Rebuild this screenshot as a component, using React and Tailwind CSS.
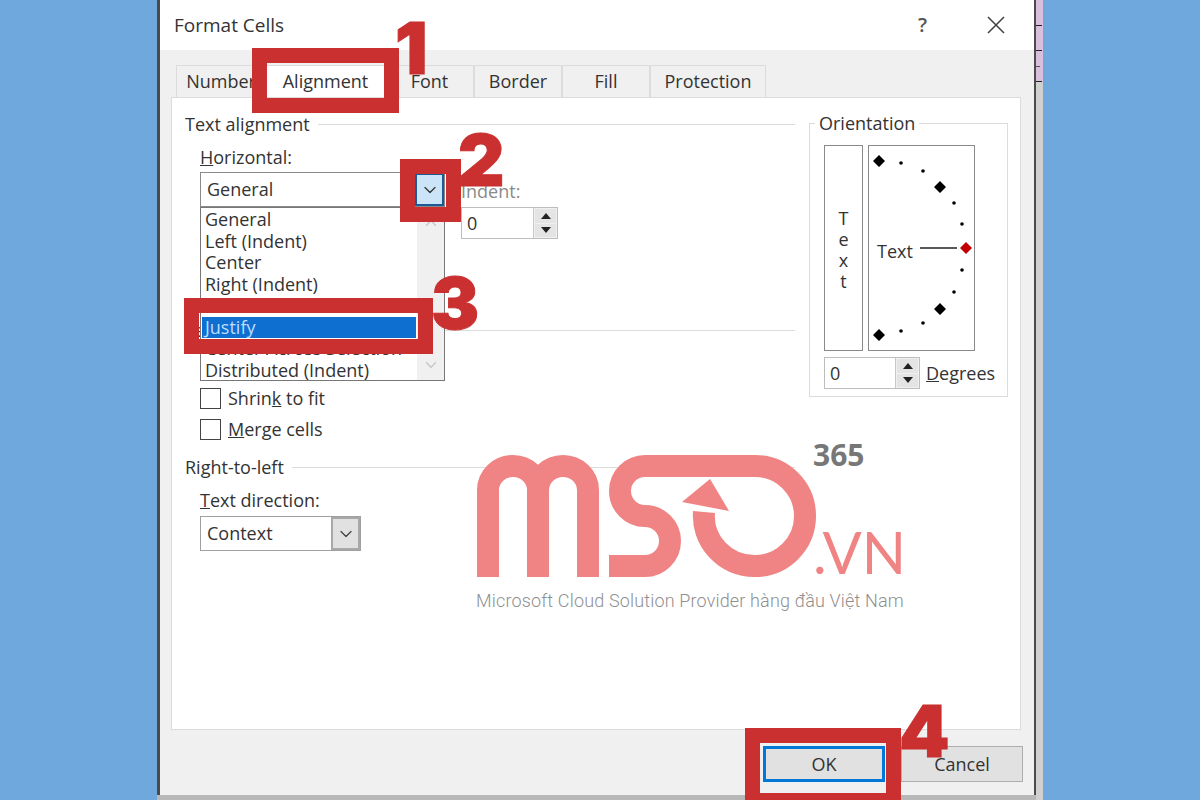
import React from 'react';
import { ChevronDown } from 'lucide-react';

const Spin = () => (
    <div className="w-[24px] h-full flex flex-col gap-px bg-[#f0f0f0] border-l border-[#c8c8c8] p-px">
        <div className="flex-1 bg-[#e4e4e4] flex items-center justify-center">
            <svg width="10" height="6" viewBox="0 0 10 6"><path d="M5 0 L10 6 L0 6 Z" fill="#222" /></svg>
        </div>
        <div className="flex-1 bg-[#e4e4e4] flex items-center justify-center">
            <svg width="10" height="6" viewBox="0 0 10 6"><path d="M0 0 L10 0 L5 6 Z" fill="#222" /></svg>
        </div>
    </div>
);

const GroupTitle = ({ children }) => (
    <div className="h-[24px] flex items-center gap-[8px]">
        <span>{children}</span>
        <div className="flex-1 h-px bg-[#dcdcdc]"></div>
    </div>
);

const Check = ({ children }) => (
    <div className="h-[24px] ml-[15px] flex items-center gap-[7px]">
        <div className="w-[21px] h-[21px] border border-[#444] bg-white"></div>
        <span>{children}</span>
    </div>
);

const Tab = ({ label, className }) => (
    <div className={`h-[32px] flex items-center justify-center bg-[#f0f0f0] border border-b-0 border-[#dcdcdc] ${className}`}>{label}</div>
);

const listItems = ['General', 'Left (Indent)', 'Center', 'Right (Indent)', 'Fill', 'Justify', 'Center Across Selection', 'Distributed (Indent)'];

const Dial = () => (
    <svg width="105" height="204" viewBox="869 146 105 204" className="absolute left-0 top-0">
        <path d="M879 155 L885 161 L879 167 L873 161 Z M940 181 L946 187 L940 193 L934 187 Z M940 303 L946 309 L940 315 L934 309 Z M879 329 L885 335 L879 341 L873 335 Z" fill="#000" />
        <path d="M966 242 L972 248 L966 254 L960 248 Z" fill="#c00000" />
        <path d="M920 248 H957" stroke="#222" strokeWidth="1.5" />
        {[[901, 163], [923, 171], [954, 203], [962, 224], [962, 270], [954, 292], [923, 323], [901, 331]].map(([x, y]) => (
            <circle key={`${x}-${y}`} cx={x} cy={y} r="1.8" fill="#000" />
        ))}
    </svg>
);

const App = () => {
    return (
        <div className="relative w-[1200px] h-[800px] overflow-hidden bg-[#6fa8dc] text-[#333] text-[18px] font-['Open_Sans',sans-serif]">
            <div className="flex h-full pl-[157px]">
                <div className="w-[879px] h-full bg-[#b8b8b8]">
                    <div className="w-full h-[795px] flex flex-col border-l-[3px] border-r-[2px] border-[#4a4a4a] bg-[#f0f0f0]">
                        {/* title bar */}
                        <div className="h-[50px] shrink-0 bg-white flex items-center pl-[14px]">
                            <span className="text-[19px]">Format Cells</span>
                            <span className="ml-auto text-[20px] font-semibold text-[#555]">?</span>
                            <svg width="20" height="20" viewBox="0 0 20 20" className="ml-[59px] mr-[28px]">
                                <path d="M2 2 L18 18 M18 2 L2 18" stroke="#444" strokeWidth="1.6" />
                            </svg>
                        </div>

                        {/* tabs */}
                        <div className="h-[47px] shrink-0 flex items-end pl-[16px]">
                            <Tab label="Number" className="w-[90px]" />
                            <Tab label="Alignment" className="w-[119px] bg-white" />
                            <Tab label="Font" className="w-[89px]" />
                            <Tab label="Border" className="w-[88px]" />
                            <Tab label="Fill" className="w-[88px]" />
                            <Tab label="Protection" className="w-[116px]" />
                        </div>

                        <div className="ml-[11px] w-[850px] h-[633px] shrink-0 bg-white border border-[#dcdcdc] flex">
                            {/* left column */}
                            <div className="w-[610px] ml-[13px] pt-[14px]">
                                <GroupTitle>Text alignment</GroupTitle>
                                <div className="ml-[15px] mt-[9px] h-[24px] flex items-center"><span><u>H</u>orizontal:</span></div>
                                <div className="ml-[15px] mt-[3px] flex items-start">
                                    <div className="relative w-[245px] h-[35px] border border-[#8a8a8a] bg-white flex items-center pl-[6px]">
                                        General
                                        <div className="absolute right-0 top-0 w-[29px] h-full bg-[#cce4f7] border-2 border-[#1a5a96] flex items-center justify-center">
                                            <ChevronDown size={20} strokeWidth={1.5} color="#333" />
                                        </div>
                                        <div className="absolute z-10 left-[-1px] top-[34px] w-[245px] h-[174px] border border-[#777] bg-white flex">
                                            <div className="flex-1 min-w-0 pl-[4px] pr-[1px] pt-[1px]">
                                                {listItems.map((item) => (
                                                    <div
                                                        key={item}
                                                        className={item === 'Justify'
                                                            ? 'h-[21.5px] -ml-[3px] pl-[3px] leading-[21.5px] bg-[#0f6fd0] text-[#bcdcff]'
                                                            : 'h-[21.5px] leading-[21.5px] whitespace-nowrap'}
                                                    >
                                                        {item}
                                                    </div>
                                                ))}
                                            </div>
                                            <div className="w-[27px] shrink-0 bg-[#f0f0f0] flex flex-col items-center justify-between py-[6px]">
                                                <ChevronDown size={18} color="#c8c8c8" className="rotate-180" />
                                                <ChevronDown size={18} color="#c8c8c8" />
                                            </div>
                                        </div>
                                    </div>
                                    <div className="ml-[16px] mt-[7px]">
                                        <div className="h-[24px] flex items-center text-[#8a8a8a]">Indent:</div>
                                        <div className="mt-[4px] w-[97px] h-[32px] border border-[#bdbdbd] flex items-center">
                                            <span className="flex-1 pl-[5px]">0</span>
                                            <Spin />
                                        </div>
                                    </div>
                                </div>
                                <div className="mt-[79px]"><GroupTitle>Text control</GroupTitle></div>
                                <div className="mt-[44px]"><Check>Shrin<u>k</u> to fit</Check></div>
                                <div className="mt-[7px]"><Check><u>M</u>erge cells</Check></div>
                                <div className="mt-[14px]"><GroupTitle>Right-to-left</GroupTitle></div>
                                <div className="ml-[15px] mt-[9px] h-[24px] flex items-center"><span><u>T</u>ext direction:</span></div>
                                <div className="ml-[15px] mt-[4px] w-[161px] h-[35px] border border-[#a0a0a0] bg-white flex items-center pl-[6px]">
                                    <span className="flex-1">Context</span>
                                    <div className="w-[29px] h-full bg-[#e1e1e1] border-2 border-[#a8a8a8] flex items-center justify-center">
                                        <ChevronDown size={20} strokeWidth={1.5} color="#444" />
                                    </div>
                                </div>
                            </div>

                            {/* orientation */}
                            <div className="relative ml-[14px] mt-[25px] w-[199px] h-[274px] border border-[#dcdcdc] pl-[14px] pt-[21px]">
                                <span className="absolute left-[5px] top-[-13px] bg-white px-[4px] leading-[24px]">Orientation</span>
                                <div className="flex gap-[5px]">
                                    <div className="w-[39px] h-[206px] border border-[#8a8a8a] flex flex-col items-center justify-center leading-[21px] pt-[4px]">
                                        <span>T</span><span>e</span><span>x</span><span>t</span>
                                    </div>
                                    <div className="relative w-[107px] h-[206px] border border-[#8a8a8a]">
                                        <Dial />
                                        <span className="absolute left-[8px] top-[92px]">Text</span>
                                    </div>
                                </div>
                                <div className="mt-[6px] flex items-center gap-[6px]">
                                    <div className="w-[96px] h-[32px] border border-[#bdbdbd] flex items-center">
                                        <span className="flex-1 pl-[5px]">0</span>
                                        <Spin />
                                    </div>
                                    <span><u>D</u>egrees</span>
                                </div>
                            </div>
                        </div>

                        {/* buttons */}
                        <div className="mt-[16px] flex justify-end gap-[16px] pr-[11px]">
                            <div className="w-[122px] h-[36px] bg-[#e1e1e1] border-[3px] border-[#0078d7] flex items-center justify-center">OK</div>
                            <div className="w-[122px] h-[36px] bg-[#e1e1e1] border border-[#adadad] flex items-center justify-center">Cancel</div>
                        </div>
                    </div>
                </div>
                {/* sliver of the sheet behind the dialog */}
                <div className="w-[7px] h-full flex flex-col">
                    <div className="h-[82px] bg-[#d8c0dc] flex flex-col pt-[25px]">
                        <div className="h-px w-[6px] bg-[#222]"></div>
                        <div className="h-px w-[6px] mt-[24px] bg-[#222]"></div>
                        <div className="h-px w-[4px] mt-[15px] bg-[#555]"></div>
                        <div className="h-px w-[6px] mt-[14px] bg-[#222]"></div>
                    </div>
                    <div className="flex-1 bg-[#d0d0d0]"></div>
                </div>
            </div>

            {/* red callouts */}
            <div className="absolute z-20 left-[252px] top-[48px] w-[147px] h-[65px] border-[15px] border-[#c9302f]"></div>
            <div className="absolute z-20 left-[400px] top-[159px] w-[61px] h-[63px] border-[15px] border-[#c9302f]"></div>
            <div className="absolute z-20 left-[184px] top-[298px] w-[249px] h-[56px] border-[15px] border-[#c9302f]"></div>
            <div className="absolute z-20 left-[745px] top-[728px] w-[156px] h-[80px] border-[15px] border-[#c9302f]"></div>

            <span className="absolute z-20 left-[395px] top-[8px] text-[72px] leading-[80px] font-black text-[#c9302f] [-webkit-text-stroke:1px_#c9302f] font-['Inter',sans-serif]">1</span>
            <span className="absolute z-20 left-[458px] top-[120px] text-[72px] leading-[80px] font-black text-[#c9302f] [-webkit-text-stroke:1px_#c9302f] font-['Inter',sans-serif]">2</span>
            <span className="absolute z-20 left-[431px] top-[263px] text-[72px] leading-[80px] font-black text-[#c9302f] [-webkit-text-stroke:1px_#c9302f] font-['Inter',sans-serif]">3</span>
            <span className="absolute z-20 left-[899px] top-[691px] text-[72px] leading-[80px] font-black text-[#c9302f] [-webkit-text-stroke:1px_#c9302f] font-['Inter',sans-serif]">4</span>

            {/* watermark */}
            <svg width="340" height="122" viewBox="477 455 340 122" className="absolute z-10 left-[477px] top-[455px]">
                <g fill="none" stroke="#f08383" strokeWidth="22">
                    <path d="M488 577 V490 A25 24 0 0 1 538 490 V577 M538 490 A25 24 0 0 1 588 490 V577" />
                    <path d="M609 566 H645 A25 25 0 0 0 645 516 A25 25 0 0 1 645 466 H755 A50 50 0 0 1 755 566 A51 50 0 0 1 704 512" />
                </g>
                <path d="M710 479 L682 502 L729 511 Z" fill="#f08383" />
            </svg>
            <span className="absolute z-10 left-[813px] top-[436px] text-[30px] leading-[38px] font-bold text-[#777] font-['Open_Sans',sans-serif]">365</span>
            <span className="absolute z-10 left-[813px] top-[519px] text-[58px] leading-[66px] font-normal text-[#f08383] font-['Lato',sans-serif]">.VN</span>
            <span className="absolute z-10 left-[476px] top-[589px] text-[18px] leading-[24px] font-light tracking-[0.16px] text-[#8f8f8f] whitespace-nowrap font-['Roboto',sans-serif]">Microsoft Cloud Solution Provider hàng đầu Việt Nam</span>
        </div>
    );
};

export default App;
